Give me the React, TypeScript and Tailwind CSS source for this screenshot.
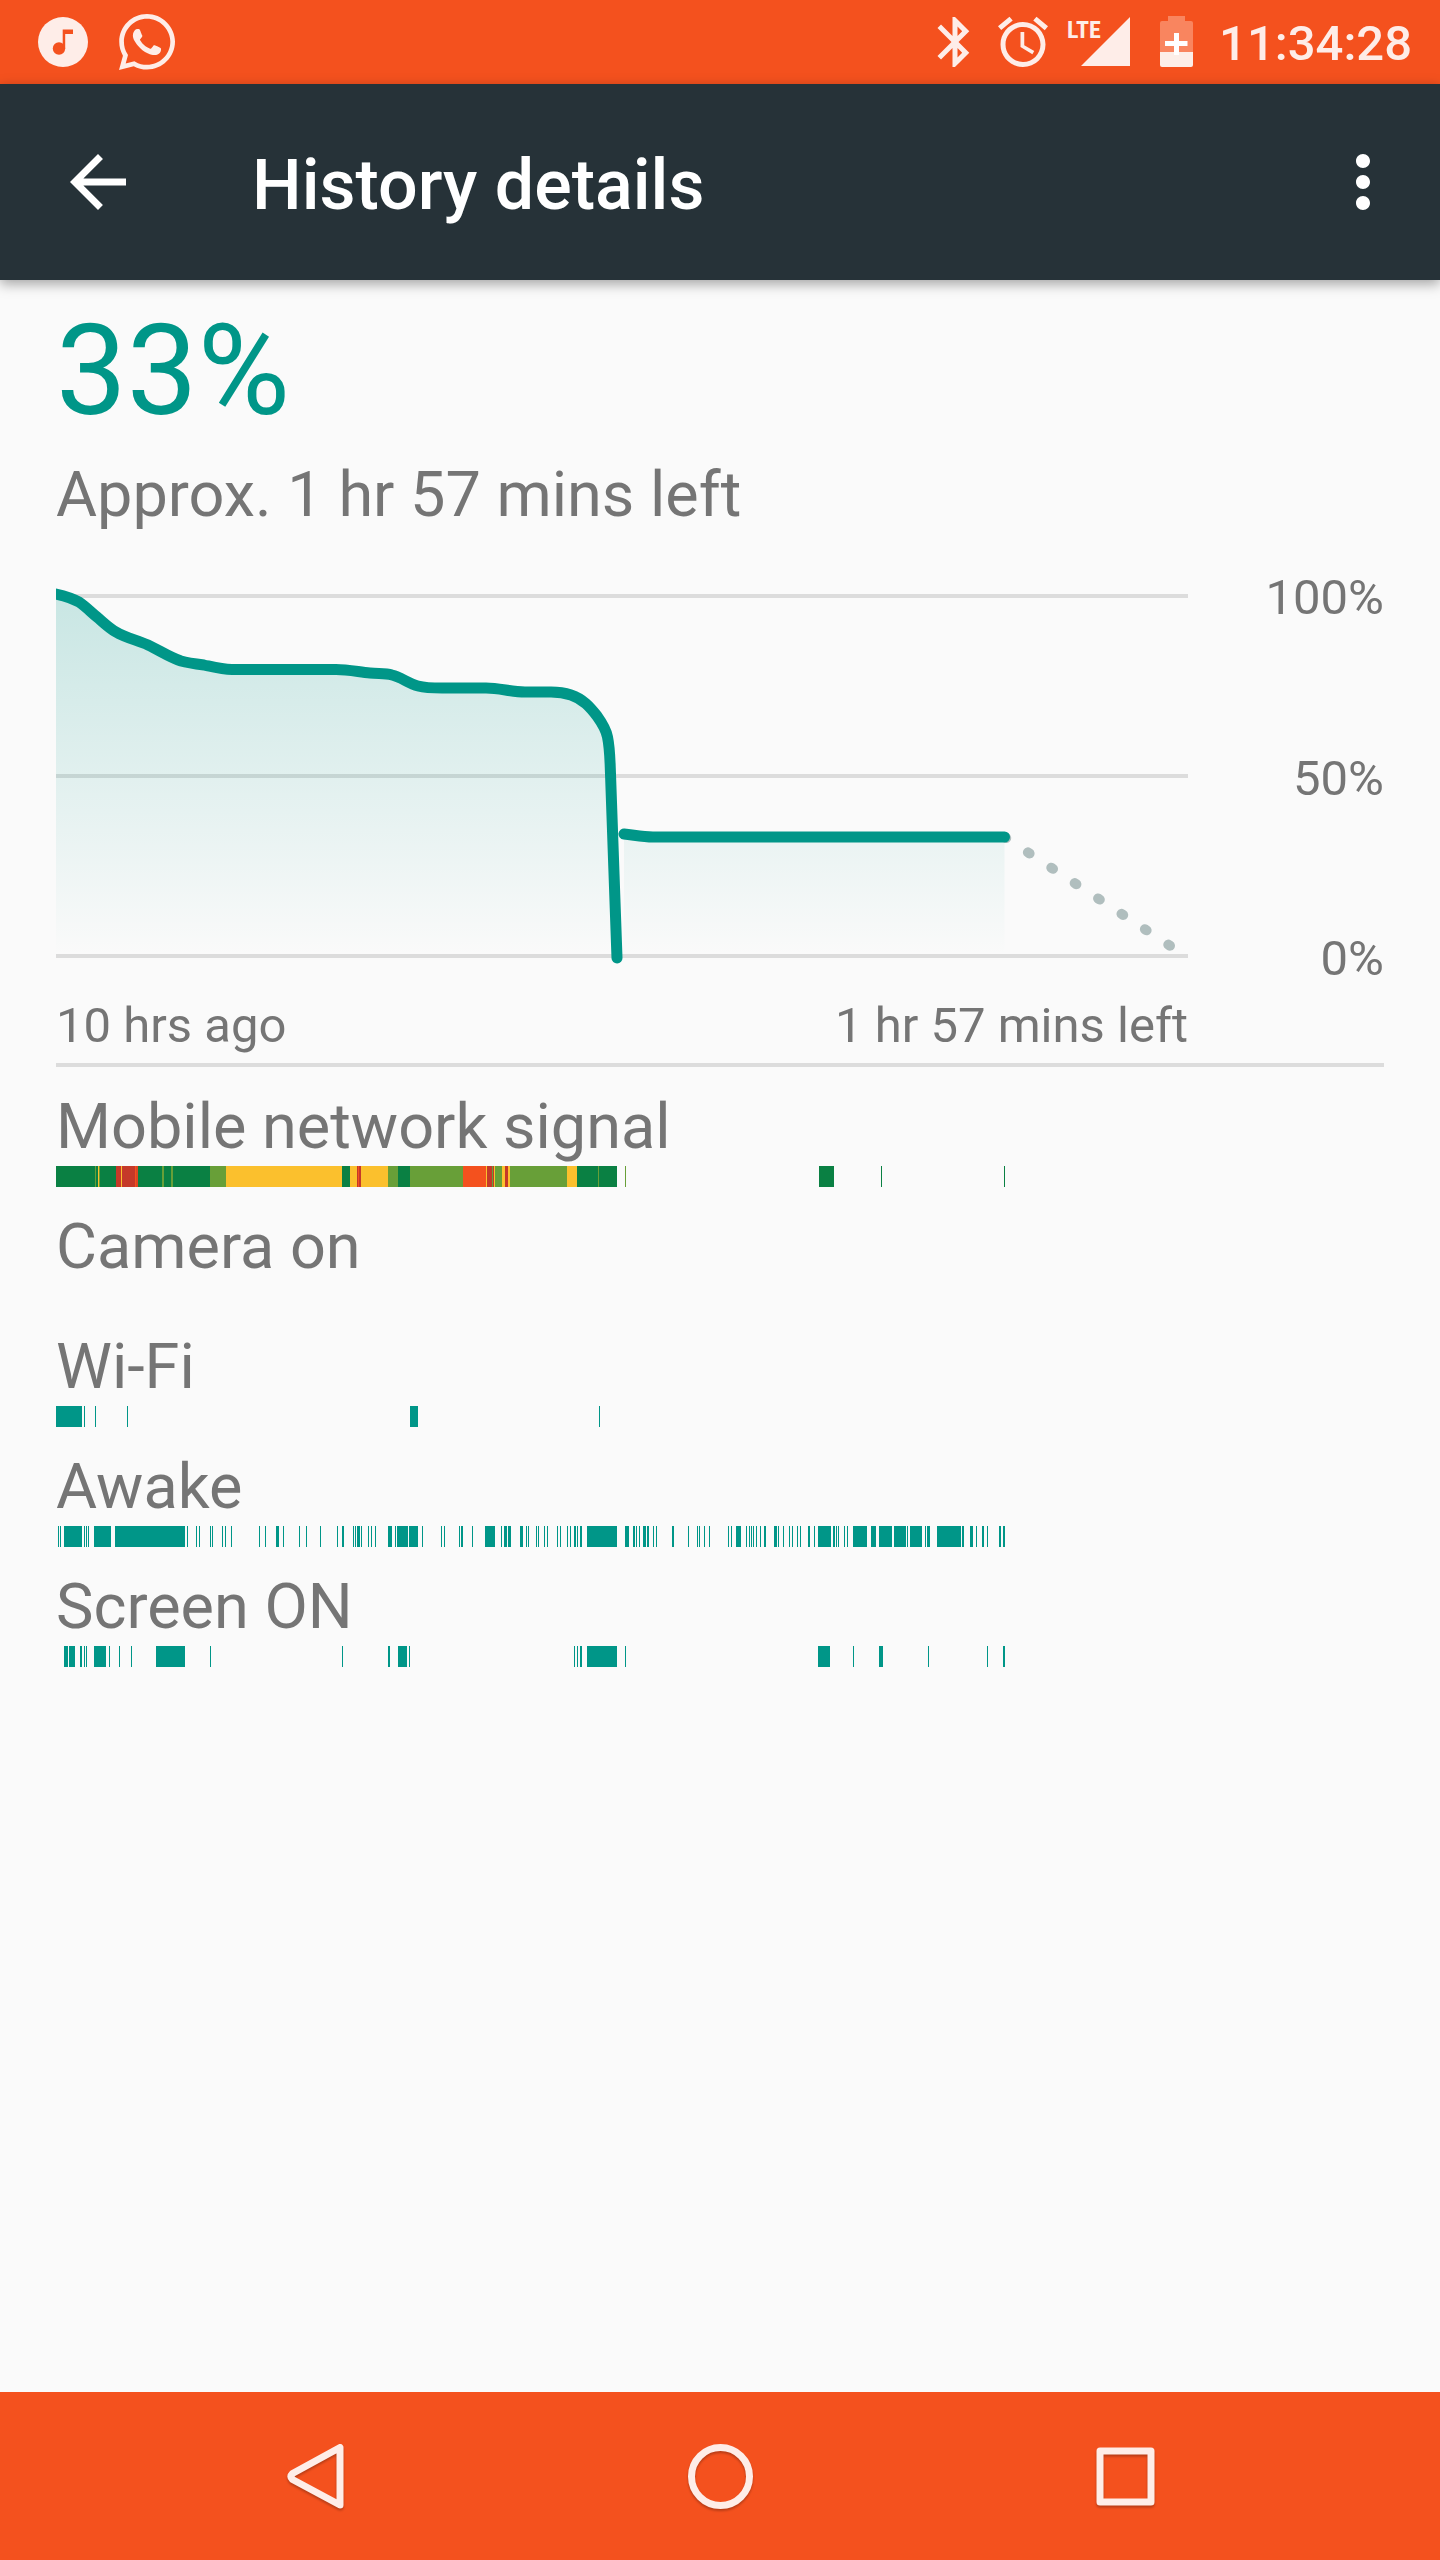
import React from "react";
import { FaWhatsapp } from "react-icons/fa";
import { MdAccessAlarm, MdArrowBack, MdBluetooth, MdMoreVert } from "react-icons/md";

// [start, end, color] on a 1132 unit wide timeline
type Segment = [number, number, string?];

const TEAL = "#009688";
const GREAT = "#0a8043";
const GOOD = "#689f38";
const FAIR = "#fbc02d";
const POOR = "#f4511e";
const NONE = "#c53929";

const signal: Segment[] = [
  [0, 39, GREAT], [39, 40, GOOD], [40, 42, GREAT], [42, 43, FAIR], [43, 44, GOOD],
  [44, 60, GREAT], [60, 65, NONE], [65, 66, FAIR], [66, 79, NONE], [79, 80, POOR],
  [80, 82, "#dd4622"], [82, 106, GREAT], [106, 108, GOOD], [108, 115, GREAT], [115, 117, GOOD],
  [117, 154, GREAT], [154, 170, GOOD], [170, 286, FAIR], [286, 294, GREAT], [294, 301, FAIR],
  [301, 302, NONE], [302, 303, POOR], [303, 305, NONE], [305, 332, FAIR], [332, 342, GOOD],
  [342, 354, GREAT], [354, 407, GOOD], [407, 430, POOR], [430, 431, FAIR], [431, 436, NONE],
  [436, 437, GOOD], [437, 438, NONE], [438, 439, FAIR], [439, 446, GOOD], [446, 449, FAIR],
  [449, 452, NONE], [452, 454, FAIR], [454, 511, GOOD], [511, 521, FAIR], [521, 542, GREAT],
  [542, 543, GOOD], [543, 561, GREAT], [569, 570, GOOD], [763, 778, GREAT], [825, 826, GREAT],
  [948, 949, GREAT],
];

const wifi: Segment[] = [
  [0, 26], [28, 29], [39, 40], [71, 72], [354, 362], [543, 544],
];

const awake: Segment[] = [
  [2, 3], [4, 5], [8, 26], [28, 29], [30, 31], [32, 33], [38, 55], [59, 129],
  [131, 132], [140, 141], [143, 144], [154, 155], [156, 157], [166, 167], [169, 170], [175, 176],
  [203, 204], [209, 210], [220, 223], [227, 228], [243, 244], [250, 251], [264, 265], [281, 282],
  [286, 288], [297, 298], [299, 300], [301, 304], [305, 306], [312, 313], [315, 316], [319, 320],
  [332, 336], [339, 340], [341, 352], [353, 362], [366, 367], [385, 386], [388, 389], [403, 404],
  [405, 407], [416, 417], [429, 439], [445, 446], [448, 451], [452, 455], [464, 467], [470, 471],
  [472, 473], [480, 481], [482, 483], [488, 489], [491, 492], [501, 502], [504, 505], [511, 512],
  [514, 515], [518, 520], [521, 522], [524, 526], [531, 561], [569, 573], [577, 579], [580, 581],
  [583, 584], [587, 590], [591, 593], [597, 598], [600, 601], [616, 618], [632, 633], [641, 642],
  [643, 644], [648, 649], [653, 654], [672, 673], [675, 676], [680, 685], [690, 691], [693, 694],
  [695, 696], [697, 698], [700, 701], [704, 705], [708, 710], [718, 721], [722, 723], [727, 728],
  [733, 734], [736, 737], [741, 742], [744, 745], [752, 754], [758, 759], [762, 775], [777, 779],
  [780, 781], [782, 783], [788, 789], [791, 792], [797, 811], [815, 820], [823, 836], [838, 850],
  [851, 852], [854, 866], [869, 870], [871, 874], [881, 905], [906, 908], [914, 917], [920, 921],
  [926, 928], [931, 932], [943, 945], [947, 949],
];

const screenOn: Segment[] = [
  [8, 12], [13, 19], [24, 26], [28, 29], [30, 31], [38, 50], [53, 54], [63, 64],
  [75, 76], [100, 129], [154, 155], [286, 287], [332, 334], [342, 351], [353, 354], [518, 519],
  [521, 522], [524, 526], [531, 561], [569, 570], [762, 774], [797, 798], [823, 827], [872, 873],
  [931, 932], [947, 949],
];

const rows: { label: string; segments: Segment[] }[] = [
  { label: "Mobile network signal", segments: signal },
  { label: "Camera on", segments: [] },
  { label: "Wi-Fi", segments: wifi },
  { label: "Awake", segments: awake },
  { label: "Screen ON", segments: screenOn },
];

const DISCHARGE =
  "M0 8C9 10 16 12 23 16C29 20 35 26 41 31C47 36 53 42 60 46C70 52 81 54 92 59C103 64 113 71 125 75C132 77 140 78 148 79C157 81 166 83.500 176 83.500H280C292 83.500 303 86 314 87C322 88 329 87 336 89C345 91 353 98 362 100C370 102 378 102 386 102H430C444 102 455 106 469 106H495C503 106 509 107 515 109C527 113 534 121 541 130C546 137 550 143 551.500 151C554 163 554 176 554.500 188L561 372";
const RESUMED = "M568 248C578 249 586 251 597 251H948.500";

function MusicIcon() {
  return (
    <svg viewBox="0 0 50 50" className="size-[50px]" aria-hidden="true">
      <circle cx="25" cy="25" r="25" fill="currentColor" />
      <circle cx="21" cy="31.500" r="6.200" fill="#f4511e" />
      <path d="M24.700 12.500H35V17H27.200V31.500H24.700Z" fill="#f4511e" />
    </svg>
  );
}

function SignalIcon() {
  return (
    <svg viewBox="0 0 84 60" className="h-[60px] w-[84px]" role="img" aria-label="LTE signal">
      <text
        x="6"
        y="26"
        fill="currentColor"
        className="font-['Roboto_Condensed','Liberation_Sans_Narrow',Roboto,sans-serif] text-[24px] font-bold"
      >
        LTE
      </text>
      <path d="M69 5V54H20Z" fill="currentColor" />
    </svg>
  );
}

function BatteryIcon() {
  return (
    <svg viewBox="0 0 48 60" className="h-[60px] w-12" role="img" aria-label="Battery charging">
      <path d="M15 4H32V9H38Q40 9 40 11V40H7V11Q7 9 9 9H15Z" fill="#f9855f" />
      <path d="M7 40H40V53Q40 55 38 55H9Q7 55 7 53Z" fill="#fdeee8" />
      <path d="M21 21H26V29H34.500V34H26V43H21V34H12V29H21Z" fill="#fff" />
    </svg>
  );
}

function StatusBar() {
  return (
    <header className="flex h-21 items-center justify-between bg-[#f4511e] pr-7 pl-[38px] text-[#feede8]">
      <div className="flex items-center gap-[27px]">
        <MusicIcon />
        <FaWhatsapp className="size-16" aria-hidden="true" />
      </div>
      <div className="flex items-center gap-2">
        <MdBluetooth className="size-[60px]" aria-hidden="true" />
        <MdAccessAlarm className="size-[60px]" aria-hidden="true" />
        <SignalIcon />
        <BatteryIcon />
        <time className="pt-1 pl-2.5 text-[49px] font-medium">11:34:28</time>
      </div>
    </header>
  );
}

function AppBar() {
  return (
    <div className="relative flex h-49 items-center bg-[#263238] pr-[35px] pl-14 text-white shadow-[0_4px_12px_rgba(0,0,0,0.35)]">
      <button type="button" aria-label="Back">
        <MdArrowBack className="size-21" />
      </button>
      <h1 className="ml-28 flex-1 pt-1.5 text-[70px] font-medium">History details</h1>
      <button type="button" aria-label="More options">
        <MdMoreVert className="size-21" />
      </button>
    </div>
  );
}

function BatteryChart() {
  return (
    <div className="flex">
      <svg
        viewBox="0 0 1132 380"
        preserveAspectRatio="none"
        className="mt-[17px] h-[380px] min-w-0 flex-1"
        role="img"
        aria-label="Battery level history"
      >
        <defs>
          <linearGradient id="level" gradientUnits="userSpaceOnUse" x1="0" y1="8" x2="0" y2="370">
            <stop offset="0" stopColor={TEAL} stopOpacity="0.2" />
            <stop offset="1" stopColor={TEAL} stopOpacity="0" />
          </linearGradient>
        </defs>
        <path d="M0 8H1132V12H0ZM0 188H1132V192H0ZM0 368H1132V372H0Z" fill="#dcdcdc" />
        <path d={`${DISCHARGE}H0Z`} fill="url(#level)" />
        <path d={`${RESUMED}V370H568Z`} fill="url(#level)" />
        <path
          d="M948.500 251L1122 365"
          fill="none"
          stroke="#b0bebe"
          strokeWidth="10"
          strokeLinecap="round"
          strokeDasharray="2 26"
        />
        <path
          d={`${DISCHARGE}${RESUMED}`}
          fill="none"
          stroke={TEAL}
          strokeWidth="11"
          strokeLinecap="round"
          strokeLinejoin="round"
        />
      </svg>
      <div className="flex h-[419px] w-49 flex-col justify-between text-right text-[49px] leading-[58px]">
        <span>100%</span>
        <span>50%</span>
        <span>0%</span>
      </div>
    </div>
  );
}

function Timeline({ label, segments }: { label: string; segments: Segment[] }) {
  return (
    <li className="pt-[23px] pr-49">
      <h2 className="mb-0.5 text-[63px] leading-[74px]">{label}</h2>
      <svg
        viewBox="0 0 1132 21"
        preserveAspectRatio="none"
        className="block h-[21px] w-full"
        shapeRendering="crispEdges"
        aria-hidden="true"
      >
        {segments.map(([start, end, color]) => (
          <rect key={start} x={start} width={end - start} height="21" fill={color ?? TEAL} />
        ))}
      </svg>
    </li>
  );
}

function NavBar() {
  return (
    <nav className="grid h-42 grid-cols-3 bg-[#f4511e] px-28 text-[#feede8]">
      <button type="button" aria-label="Back" className="flex items-center justify-center">
        <svg viewBox="0 0 72 72" className="size-18 drop-shadow-[0_2px_1px_rgba(0,0,0,0.25)]">
          <path
            d="M61 7.500V65L13.500 39.500Q10.500 36.500 13.500 33.500Z"
            fill="none"
            stroke="currentColor"
            strokeWidth="7"
            strokeLinejoin="round"
          />
        </svg>
      </button>
      <button type="button" aria-label="Home" className="flex items-center justify-center">
        <svg viewBox="0 0 72 72" className="size-18 drop-shadow-[0_2px_1px_rgba(0,0,0,0.25)]">
          <circle cx="36.500" cy="36.500" r="29" fill="none" stroke="currentColor" strokeWidth="7" />
        </svg>
      </button>
      <button type="button" aria-label="Recent apps" className="flex items-center justify-center">
        <svg viewBox="0 0 72 72" className="size-18 drop-shadow-[0_2px_1px_rgba(0,0,0,0.25)]">
          <rect
            x="11"
            y="11"
            width="51"
            height="51"
            fill="none"
            stroke="currentColor"
            strokeWidth="7"
            strokeLinejoin="round"
          />
        </svg>
      </button>
    </nav>
  );
}

function App() {
  return (
    <div className="flex min-h-screen flex-col bg-[#fafafa] font-[Roboto,sans-serif] text-[#757575]">
      <StatusBar />
      <AppBar />
      <main className="flex-1 px-14 pt-[17px]">
        <p className="text-[126px] leading-[148px] text-[#009688]">33%</p>
        <p className="mt-[13px] mb-[37px] text-[63px] leading-[74px]">
          Approx. 1 hr 57 mins left
        </p>
        <BatteryChart />
        <div className="mt-[9px] flex justify-between border-b-4 border-[#dcdcdc] pr-49 pb-2 text-[49px] leading-[58px]">
          <span>10 hrs ago</span>
          <span>1 hr 57 mins left</span>
        </div>
        <ul>
          {rows.map((row) => (
            <Timeline key={row.label} label={row.label} segments={row.segments} />
          ))}
        </ul>
      </main>
      <NavBar />
    </div>
  );
}

export default App;
